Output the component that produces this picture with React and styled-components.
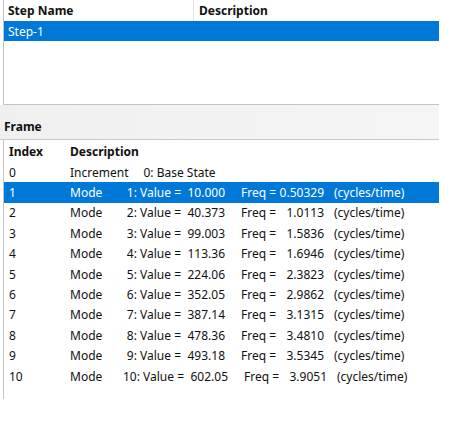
import React from 'react'
import styled, { createGlobalStyle } from 'styled-components'

const GlobalStyle = createGlobalStyle`
  body {
    margin: 0;
    background: #ffffff;
    font-family: 'Noto Sans', 'Liberation Sans', sans-serif;
    font-size: 12px;
    color: #111;
  }
`

const Window = styled.div`
  width: 439px;
  display: flex;
  flex-direction: column;
`

const StepPanel = styled.div`
  margin-left: 3px;
  height: 104px;
  border-left: 1px solid #c4c4c4;
  border-bottom: 1px solid #c4c4c4;
  display: flex;
  flex-direction: column;
`

const StepHeader = styled.div`
  display: flex;
  height: 21px;
  align-items: center;
  font-weight: 700;
`

const StepHeaderCell = styled.div`
  width: ${(p) => p.width || 'auto'};
  height: 100%;
  display: flex;
  align-items: center;
  padding-left: ${(p) => p.pad || 4}px;
  box-sizing: border-box;
  border-right: ${(p) => (p.divider ? '1px solid #e6e6e6' : 'none')};
  flex: ${(p) => (p.width ? 'none' : 1)};
`

const ListRow = styled.div`
  display: flex;
  align-items: center;
  height: ${(p) => p.h}px;
  background: ${(p) => (p.selected ? '#0078d7' : 'transparent')};
  color: ${(p) => (p.selected ? '#ffffff' : '#111')};
  white-space: nowrap;
`

const FrameBar = styled.div`
  height: 35px;
  background: linear-gradient(to right, #f0f0f0, #f5f5f5);
  border-bottom: 1px solid #c8c8c8;
  display: flex;
  align-items: center;
  padding-left: 4px;
  padding-top: 8px;
  box-sizing: border-box;
  font-weight: 700;
`

const FramePanel = styled.div`
  margin-left: 3px;
  height: 259px;
  border-left: 1px solid #c4c4c4;
  display: flex;
  flex-direction: column;
`

const FrameHeader = styled.div`
  display: flex;
  align-items: center;
  height: 22px;
  font-weight: 700;
`

const IndexCell = styled.div`
  width: 61px;
  padding-left: ${(p) => p.pad ?? 5}px;
  flex: none;
`

const DescGrid = styled.div`
  display: grid;
  grid-template-columns: ${(p) => 50 + p.shift}px 61px 44px 16px 37px 46px 10px auto;
  align-items: center;
`

const Part = styled.span`
  text-align: ${(p) => (p.right ? 'right' : 'left')};
  grid-column: ${(p) => p.col};
`

const BaseState = styled.span`
  padding-left: 15px;
`

const frames = [
  ['1', '10.000', '0.50329'],
  ['2', '40.373', '1.0113'],
  ['3', '99.003', '1.5836'],
  ['4', '113.36', '1.6946'],
  ['5', '224.06', '2.3823'],
  ['6', '352.05', '2.9862'],
  ['7', '387.14', '3.1315'],
  ['8', '478.36', '3.4810'],
  ['9', '493.18', '3.5345'],
  ['10', '602.05', '3.9051'],
]

export default function App() {
  return (
    <>
      <GlobalStyle />
      <Window>
        <StepPanel>
          <StepHeader>
            <StepHeaderCell width="190px" pad={4} divider>
              Step Name
            </StepHeaderCell>
            <StepHeaderCell pad={5}>Description</StepHeaderCell>
          </StepHeader>
          <ListRow h={20} selected>
            <IndexCell pad={4}>Step-1</IndexCell>
          </ListRow>
        </StepPanel>
        <FrameBar>Frame</FrameBar>
        <FramePanel>
          <FrameHeader>
            <IndexCell>Index</IndexCell>
            <span>Description</span>
          </FrameHeader>
          <ListRow h={20.4}>
            <IndexCell>0</IndexCell>
            <span>Increment</span>
            <BaseState>0: Base State</BaseState>
          </ListRow>
          {frames.map(([n, value, freq]) => (
            <ListRow key={n} h={20.4} selected={n === '1'}>
              <IndexCell>{n}</IndexCell>
              <DescGrid shift={n === '10' ? 3 : 0}>
                <Part col={1}>Mode</Part>
                <Part col={2} right>
                  {n}: Value =
                </Part>
                <Part col={3} right>
                  {value}
                </Part>
                <Part col={5}>Freq =</Part>
                <Part col={6} right>
                  {freq}
                </Part>
                <Part col={8}>(cycles/time)</Part>
              </DescGrid>
            </ListRow>
          ))}
        </FramePanel>
      </Window>
    </>
  )
}
